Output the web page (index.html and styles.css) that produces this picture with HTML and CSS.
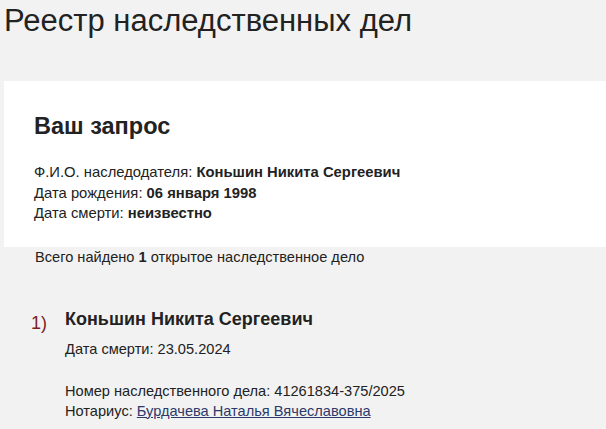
FILE: index.html
```html
<!DOCTYPE html>
<html lang="ru">
<head>
    <meta charset="UTF-8">
    <meta name="viewport" content="width=device-width, initial-scale=1.0">
    <title>Реестр наследственных дел</title>
    <link rel="stylesheet" href="styles.css">
</head>
<body>
    <div class="page">
        <h1 class="page-title">Реестр наследственных дел</h1>

        <div class="request">
            <h2>Ваш запрос</h2>
            <p>Ф.И.О. наследодателя: <b>Коньшин Никита Сергеевич</b></p>
            <p>Дата рождения: <b>06 января 1998</b></p>
            <p>Дата смерти: <b>неизвестно</b></p>
        </div>

        <div class="summary">Всего найдено <b>1</b> открытое наследственное дело</div>

        <ol class="cases">
            <li class="case">
                <span class="case-num">1)</span>
                <div class="case-body">
                    <h3>Коньшин Никита Сергеевич</h3>
                    <p class="case-death">Дата смерти: 23.05.2024</p>
                    <p>Номер наследственного дела: 41261834-375/2025</p>
                    <p>Нотариус: <a href="#">Бурдачева Наталья Вячеславовна</a></p>
                </div>
            </li>
        </ol>
    </div>
</body>
</html>
```

FILE: styles.css
```css
body {
    margin: 0;
    background-color: #f2f2f2;
    font-family: "Liberation Sans", Arial, sans-serif;
    color: #222;
}
.page {
    padding-left: 4px;
}
.page-title {
    margin: 0;
    padding-top: 3px;
    font-size: 31px;
    font-weight: normal;
    line-height: 36px;
}
.request {
    margin-top: 42px;
    background-color: #fff;
    padding: 32px 30px 23px;
}
.request h2 {
    margin: 0 0 23px;
    font-size: 23.5px;
    font-weight: bold;
    line-height: 26px;
}
.request p {
    margin: 0;
    font-size: 14.8px;
    line-height: 20.5px;
}
.summary {
    padding: 0 31px;
    font-size: 14.6px;
    line-height: 21px;
}
.cases {
    list-style: none;
    margin: 0;
    padding: 39px 0 0 27px;
}
.case {
    display: flex;
    gap: 18px;
}
.case-num {
    color: #7a1f1f;
    font-size: 18px;
    line-height: 26px;
    padding-top: 3px;
}
.case-body h3 {
    margin: 0 0 8px;
    font-size: 18px;
    line-height: 24px;
}
.case-body p {
    margin: 0;
    font-size: 14.6px;
    line-height: 20px;
}
.case-body .case-death {
    margin-bottom: 22px;
}
.case-body a {
    color: #2b3a6b;
}
```
